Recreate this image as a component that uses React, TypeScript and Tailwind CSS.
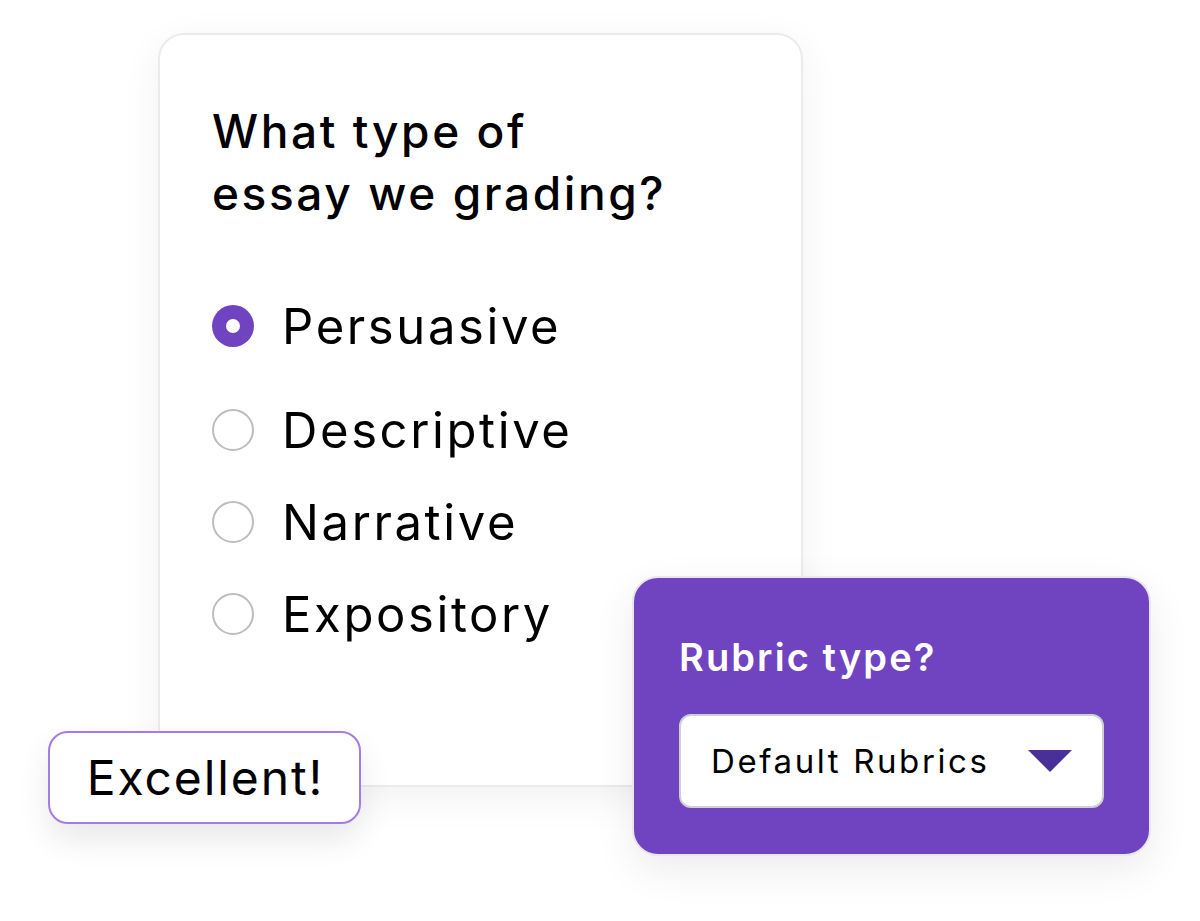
import React from 'react';

const options = [
  { label: 'Persuasive', checked: true },
  { label: 'Descriptive', checked: false },
  { label: 'Narrative', checked: false },
  { label: 'Expository', checked: false },
];

const Radio = ({ checked }: { checked: boolean }) =>
  checked ? (
    <span className="flex h-[42px] w-[42px] shrink-0 items-center justify-center rounded-full bg-[#7044c0]">
      <span className="h-[14px] w-[14px] rounded-full bg-white" />
    </span>
  ) : (
    <span className="h-[42px] w-[42px] shrink-0 rounded-full border-2 border-[#bdbdbd] bg-white" />
  );

export default function App() {
  return (
    <div className="relative h-[921px] w-[1200px] overflow-hidden bg-white font-['Inter',sans-serif] text-black">
      {/* Main question card */}
      <div className="ml-[158px] mt-[33px] h-[754px] w-[645px] rounded-[26px] border-2 border-[#ebebeb] bg-white pl-[52px] pt-[65px] shadow-[0_10px_40px_rgba(0,0,0,0.06)]">
        <h2 className="text-[46px] font-medium leading-[62px] tracking-[2.6px]">
          What type of
          <br />
          essay we grading?
        </h2>

        <div className="mt-[56px] flex flex-col">
          {options.map((o, i) => (
            <div
              key={o.label}
              className={`flex h-[92px] items-center gap-[28px] ${i === 0 ? 'mb-[12px]' : ''}`}
            >
              <Radio checked={o.checked} />
              <span className="text-[49px] font-normal leading-none tracking-[2.6px]">{o.label}</span>
            </div>
          ))}
        </div>
      </div>

      {/* Excellent badge */}
      <div className="absolute left-[48px] top-[731px] flex h-[93px] w-[313px] items-center justify-center rounded-[20px] border-2 border-[#a57be8] bg-white pl-[2px] shadow-[0_16px_32px_rgba(0,0,0,0.09)]">
        <span className="text-[48px] font-normal leading-none tracking-[1.9px]">Excellent!</span>
      </div>

      {/* Rubric card */}
      <div className="absolute left-[632px] top-[576px] h-[280px] w-[519px] rounded-[26px] border-2 border-[#e9e6ef] bg-[#7044c0] px-[45px] pt-[55px] shadow-[0_14px_40px_rgba(0,0,0,0.08)]">
        <div className="text-[38px] font-semibold leading-[48px] tracking-[2.1px] text-white">Rubric type?</div>
        <div className="mt-[33px] flex h-[94px] w-[425px] items-center justify-between rounded-[12px] border-2 border-[#cfcfd4] bg-white pl-[30px] pr-[30px]">
          <span className="text-[33px] font-normal leading-none tracking-[2.6px]">Default Rubrics</span>
          <svg width="44" height="22" viewBox="0 0 44 22">
            <polygon points="0,0 44,0 22,22" fill="#4b2f99" />
          </svg>
        </div>
      </div>
    </div>
  );
}
